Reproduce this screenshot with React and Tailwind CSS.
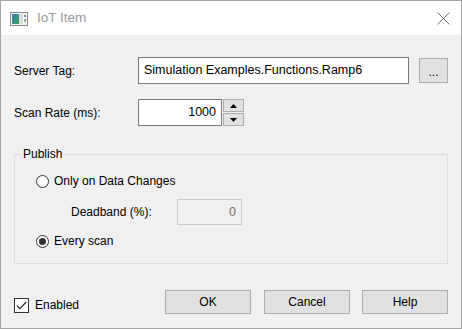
import React, { useState } from 'react';

const font = "font-['Liberation_Sans',Arial,sans-serif]";

const Radio = ({ checked, onClick, label }) => (
  <button type="button" onClick={onClick} className="flex items-center gap-[5px] h-[20px] text-left">
    <span className="w-[13px] h-[13px] rounded-full border border-[#333333] bg-white flex items-center justify-center">
      {checked && <span className="w-[7px] h-[7px] rounded-full bg-[#333333]" />}
    </span>
    <span>{label}</span>
  </button>
);

const WinButton = ({ children, className = '' }) => (
  <button type="button" className={`h-[24px] bg-[#e1e1e1] border border-[#adadad] text-black ${className}`}>
    {children}
  </button>
);

const App = () => {
  const [onChange, setOnChange] = useState(false);
  const [enabled, setEnabled] = useState(true);
  const [rate, setRate] = useState(1000);

  return (
    <div className={`w-[462px] h-[329px] flex flex-col border border-[#a6a6a6] bg-[#f0f0f0] text-[12px] text-black ${font}`}>
      {/* title bar */}
      <div className="h-[34px] bg-white flex items-center pl-[9px] pr-[11px] shrink-0">
        <svg width="18" height="14" viewBox="0 0 18 14" className="mt-[1px]">
          <defs>
            <linearGradient id="ig" x1="0" y1="0" x2="1" y2="1">
              <stop offset="0" stopColor="#3a78b8" />
              <stop offset="1" stopColor="#3aa55a" />
            </linearGradient>
          </defs>
          <rect x="0.5" y="0.5" width="17" height="13" fill="#f4f4f4" stroke="#8c8c8c" />
          <rect x="2" y="2" width="7" height="10" fill="url(#ig)" />
          <rect x="9" y="2" width="4" height="10" fill="#dcdcdc" />
          <rect x="14" y="3" width="2" height="2" fill="#6a8fb0" />
          <rect x="14" y="7" width="2" height="3" fill="#8db08f" />
        </svg>
        <span className="ml-[9px] text-[13.5px] text-[#999999]">IoT Item</span>
        <svg width="13" height="13" viewBox="0 0 13 13" className="ml-auto">
          <path d="M0.5 0.5L12.5 12.5M12.5 0.5L0.5 12.5" stroke="#707070" strokeWidth="1" />
        </svg>
      </div>

      {/* body */}
      <div className="flex-1 flex flex-col pl-[13px] pr-[13px] pb-[14px]">
        <div className="flex items-center mt-[22px]">
          <span className="w-[124px]">Server Tag:</span>
          <div className="w-[271px] h-[27px] bg-white border border-[#7a7a7a] flex items-center px-[5px] text-[12.5px]">
            Simulation Examples.Functions.Ramp6
          </div>
          <WinButton className="ml-[10px] w-[29px] h-[25px] text-[12px] leading-none pt-[2px]">...</WinButton>
        </div>

        <div className="flex items-center mt-[15px]">
          <span className="w-[124px]">Scan Rate (ms):</span>
          <div className="w-[84px] h-[27px] bg-white border border-[#7a7a7a] flex items-center justify-end px-[5px] text-[12.5px]">
            {rate}
          </div>
          <div className="flex flex-col w-[21px] h-[27px] gap-[1px] ml-[1px]">
            <button type="button" onClick={() => setRate(rate + 1)} className="flex-1 bg-[#e1e1e1] border border-[#adadad] flex items-center justify-center">
              <svg width="7" height="4" viewBox="0 0 7 4"><path d="M0 4L3.5 0L7 4Z" fill="#000" /></svg>
            </button>
            <button type="button" onClick={() => setRate(rate - 1)} className="flex-1 bg-[#e1e1e1] border border-[#adadad] flex items-center justify-center">
              <svg width="7" height="4" viewBox="0 0 7 4"><path d="M0 0L3.5 4L7 0Z" fill="#000" /></svg>
            </button>
          </div>
        </div>

        <fieldset className="mt-[20px] w-[434px] h-[118px] border border-[#dcdcdc] pl-[21px] pt-[9px]">
          <legend className="ml-[-15px] px-[2px] leading-[16px]">Publish</legend>
          <Radio checked={onChange} onClick={() => setOnChange(true)} label="Only on Data Changes" />
          <div className="flex items-center mt-[8px] ml-[35px]">
            <span className="w-[106px]">Deadband (%):</span>
            <div className="w-[65px] h-[26px] bg-[#f0f0f0] border border-[#cccccc] flex items-center justify-end px-[5px] text-[#6d6d6d] text-[12.5px]">
              0
            </div>
          </div>
          <div className="mt-[6px]">
            <Radio checked={!onChange} onClick={() => setOnChange(false)} label="Every scan" />
          </div>
        </fieldset>

        <div className="mt-auto flex items-end">
          <button type="button" onClick={() => setEnabled(!enabled)} className="flex items-center gap-[6px]">
            <span className="w-[15px] h-[15px] border border-[#333333] bg-white flex items-center justify-center">
              {enabled && (
                <svg width="11" height="9" viewBox="0 0 11 9">
                  <path d="M0.8 4.6L3.8 7.6L10.2 1" stroke="#222" strokeWidth="1.1" fill="none" />
                </svg>
              )}
            </span>
            <span>Enabled</span>
          </button>
          <WinButton className="ml-auto w-[86px]">OK</WinButton>
          <WinButton className="ml-[13px] w-[86px]">Cancel</WinButton>
          <WinButton className="ml-[12px] w-[86px]">Help</WinButton>
        </div>
      </div>
    </div>
  );
};

export default App;
